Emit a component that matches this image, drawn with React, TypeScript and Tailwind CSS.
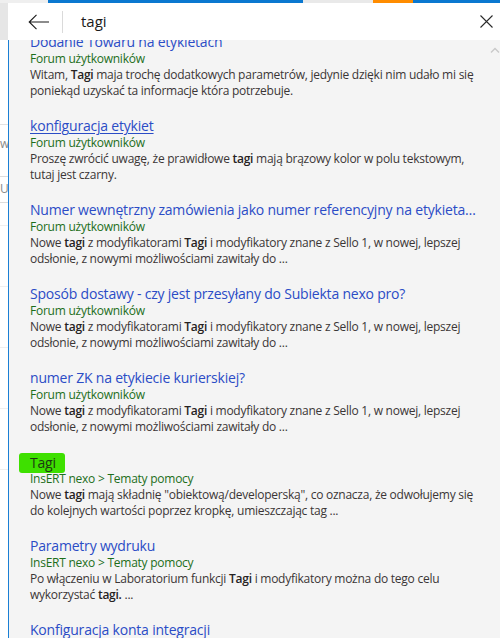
import React from "react";

type Seg = { t: string; b?: boolean };
type Item = {
  title: string;
  source: string;
  lines: Seg[][];
  underline?: boolean;
  highlight?: boolean;
};

const items: Item[] = [
  {
    title: "Dodanie Towaru na etykietach",
    source: "Forum użytkowników",
    lines: [
      [{ t: "Witam, " }, { t: "Tagi", b: true }, { t: " maja trochę dodatkowych parametrów, jedynie dzięki nim udało mi się" }],
      [{ t: "poniekąd uzyskać ta informacje która potrzebuje." }],
    ],
  },
  {
    title: "konfiguracja etykiet",
    source: "Forum użytkowników",
    underline: true,
    lines: [
      [{ t: "Proszę zwrócić uwagę, że prawidłowe " }, { t: "tagi", b: true }, { t: " mają brązowy kolor w polu tekstowym," }],
      [{ t: "tutaj jest czarny." }],
    ],
  },
  {
    title: "Numer wewnętrzny zamówienia jako numer referencyjny na etykietach kurierskich",
    source: "Forum użytkowników",
    lines: [
      [{ t: "Nowe " }, { t: "tagi", b: true }, { t: " z modyfikatorami " }, { t: "Tagi", b: true }, { t: " i modyfikatory znane z Sello 1, w nowej, lepszej" }],
      [{ t: "odsłonie, z nowymi możliwościami zawitały do ..." }],
    ],
  },
  {
    title: "Sposób dostawy - czy jest przesyłany do Subiekta nexo pro?",
    source: "Forum użytkowników",
    lines: [
      [{ t: "Nowe " }, { t: "tagi", b: true }, { t: " z modyfikatorami " }, { t: "Tagi", b: true }, { t: " i modyfikatory znane z Sello 1, w nowej, lepszej" }],
      [{ t: "odsłonie, z nowymi możliwościami zawitały do ..." }],
    ],
  },
  {
    title: "numer ZK na etykiecie kurierskiej?",
    source: "Forum użytkowników",
    lines: [
      [{ t: "Nowe " }, { t: "tagi", b: true }, { t: " z modyfikatorami " }, { t: "Tagi", b: true }, { t: " i modyfikatory znane z Sello 1, w nowej, lepszej" }],
      [{ t: "odsłonie, z nowymi możliwościami zawitały do ..." }],
    ],
  },
  {
    title: "Tagi",
    source: "InsERT nexo > Tematy pomocy",
    highlight: true,
    lines: [
      [{ t: "Nowe " }, { t: "tagi", b: true }, { t: " mają składnię \"obiektową/developerską\", co oznacza, że odwołujemy się" }],
      [{ t: "do kolejnych wartości poprzez kropkę, umieszczając tag ..." }],
    ],
  },
  {
    title: "Parametry wydruku",
    source: "InsERT nexo > Tematy pomocy",
    lines: [
      [{ t: "Po włączeniu w Laboratorium funkcji " }, { t: "Tagi", b: true }, { t: " i modyfikatory można do tego celu" }],
      [{ t: "wykorzystać " }, { t: "tagi.", b: true }, { t: " ..." }],
    ],
  },
  {
    title: "Konfiguracja konta integracji",
    source: "InsERT nexo > Tematy pomocy",
    lines: [[{ t: "" }], [{ t: "" }]],
  },
];

function Result({ item }: { item: Item }) {
  return (
    <div className="mb-[18px]">
      {item.highlight ? (
        <div className="h-[18px] flex items-center">
          <span className="-ml-[11px] inline-flex items-center h-[20px] bg-[#3ee000] text-[#1c3a12] text-[14px] tracking-[-0.2px] pl-[11px] pr-[9px] rounded-[3px] mt-[1px]">
            {item.title}
          </span>
        </div>
      ) : (
        <div
          className={
            "h-[18px] text-[14px] tracking-[-0.2px] leading-[18px] text-[#2b4cc6] truncate pr-[22px] " +
            (item.underline ? "underline decoration-1 underline-offset-2" : "")
          }
        >
          {item.title}
        </div>
      )}
      <div className="text-[12px] tracking-[-0.25px] leading-[16px] text-[#1d6e1a]">{item.source}</div>
      <div className="text-[12px] tracking-[-0.25px] leading-[16px] text-[#3b3636]">
        {item.lines.map((ln, i) => (
          <div key={i} className="h-[16px] whitespace-nowrap">
            {ln.map((s, j) =>
              s.b ? (
                <span key={j} className="font-semibold text-[#262222]">
                  {s.t}
                </span>
              ) : (
                <span key={j}>{s.t}</span>
              )
            )}
          </div>
        ))}
      </div>
    </div>
  );
}

export default function App() {
  return (
    <div
      className="w-[500px] h-[638px] overflow-hidden flex flex-col bg-white"
      style={{ fontFamily: '"Open Sans", "Noto Sans", sans-serif' }}
    >
      {/* top colored strip */}
      <div className="h-[3px] flex shrink-0">
        <div className="w-[48px] bg-[#efefef]" />
        <div className="w-[255px] bg-[#0a78d0]" />
        <div className="w-[70px] bg-[#e9e9e9]" />
        <div className="w-[40px] bg-[#ff8c00]" />
        <div className="flex-1 bg-[#0a78d0]" />
      </div>
      <div className="flex flex-1 min-h-0">
        {/* background page sliver */}
        <div className="w-[8px] flex flex-col shrink-0">
          <div className="h-[37px] bg-[#e6e6e6]" />
          <div className="flex-1 bg-white flex flex-col">
            <div className="h-[84px]" />
            <div className="h-[1px] bg-[#e2e2e2]" />
            <div className="h-[51px] text-[12px] text-[#8a8a8a] pt-[10px] overflow-hidden">w</div>
            <div className="h-[1px] bg-[#dcdcdc]" />
            <div className="h-[25px] text-[12px] text-[#8a8a8a] pt-[3px] overflow-hidden">U</div>
            <div className="h-[1px] bg-[#dcdcdc]" />
            <div className="h-[22px]" />
            <div className="h-[1px] bg-[#efefef]" />
            <div className="h-[60px]" />
            <div className="h-[1px] bg-[#efefef]" />
            <div className="h-[60px]" />
            <div className="h-[1px] bg-[#efefef]" />
            <div className="h-[60px]" />
            <div className="h-[1px] bg-[#efefef]" />
            <div className="h-[60px]" />
            <div className="h-[1px] bg-[#efefef]" />
            <div className="flex-1" />
          </div>
        </div>
        {/* flyout panel */}
        <div className="flex-1 flex flex-col min-w-0">
          <div className="h-[37px] bg-white flex items-center shrink-0">
            <svg width="22" height="16" viewBox="0 0 22 16" className="ml-[20px]">
              <path d="M1 8 H21 M8.5 0.8 L1.2 8 L8.5 15.2" stroke="#1a1a1a" strokeWidth="1.1" fill="none" />
            </svg>
            <div className="w-[1px] h-[22px] bg-[#dadada] ml-[12px]" />
            <div className="ml-[18px] text-[15px] text-[#1a1a1a] leading-none pb-[1px]">tagi</div>
            <div className="flex-1" />
            <svg width="13" height="13" viewBox="0 0 13 13" className="mr-[7px]">
              <path d="M0.5 0.5 L12.5 12.5 M12.5 0.5 L0.5 12.5" stroke="#2a2a2a" strokeWidth="1.1" fill="none" />
            </svg>
          </div>
          <div className="flex-1 min-h-0 bg-[#f4f4f4] border-l border-[#1a7fd4] relative overflow-hidden">
            <svg width="10" height="6" viewBox="0 0 10 6" className="absolute right-[0px] top-[7px]">
              <path d="M1 5.5 L5 1.5 L9 5.5" stroke="#c9c9c9" strokeWidth="1.4" fill="none" />
            </svg>
            <div className="pl-[21px] pr-[2px] mt-[-7px]">
              {items.map((it, i) => (
                <Result key={i} item={it} />
              ))}
            </div>
          </div>
        </div>
      </div>
    </div>
  );
}
